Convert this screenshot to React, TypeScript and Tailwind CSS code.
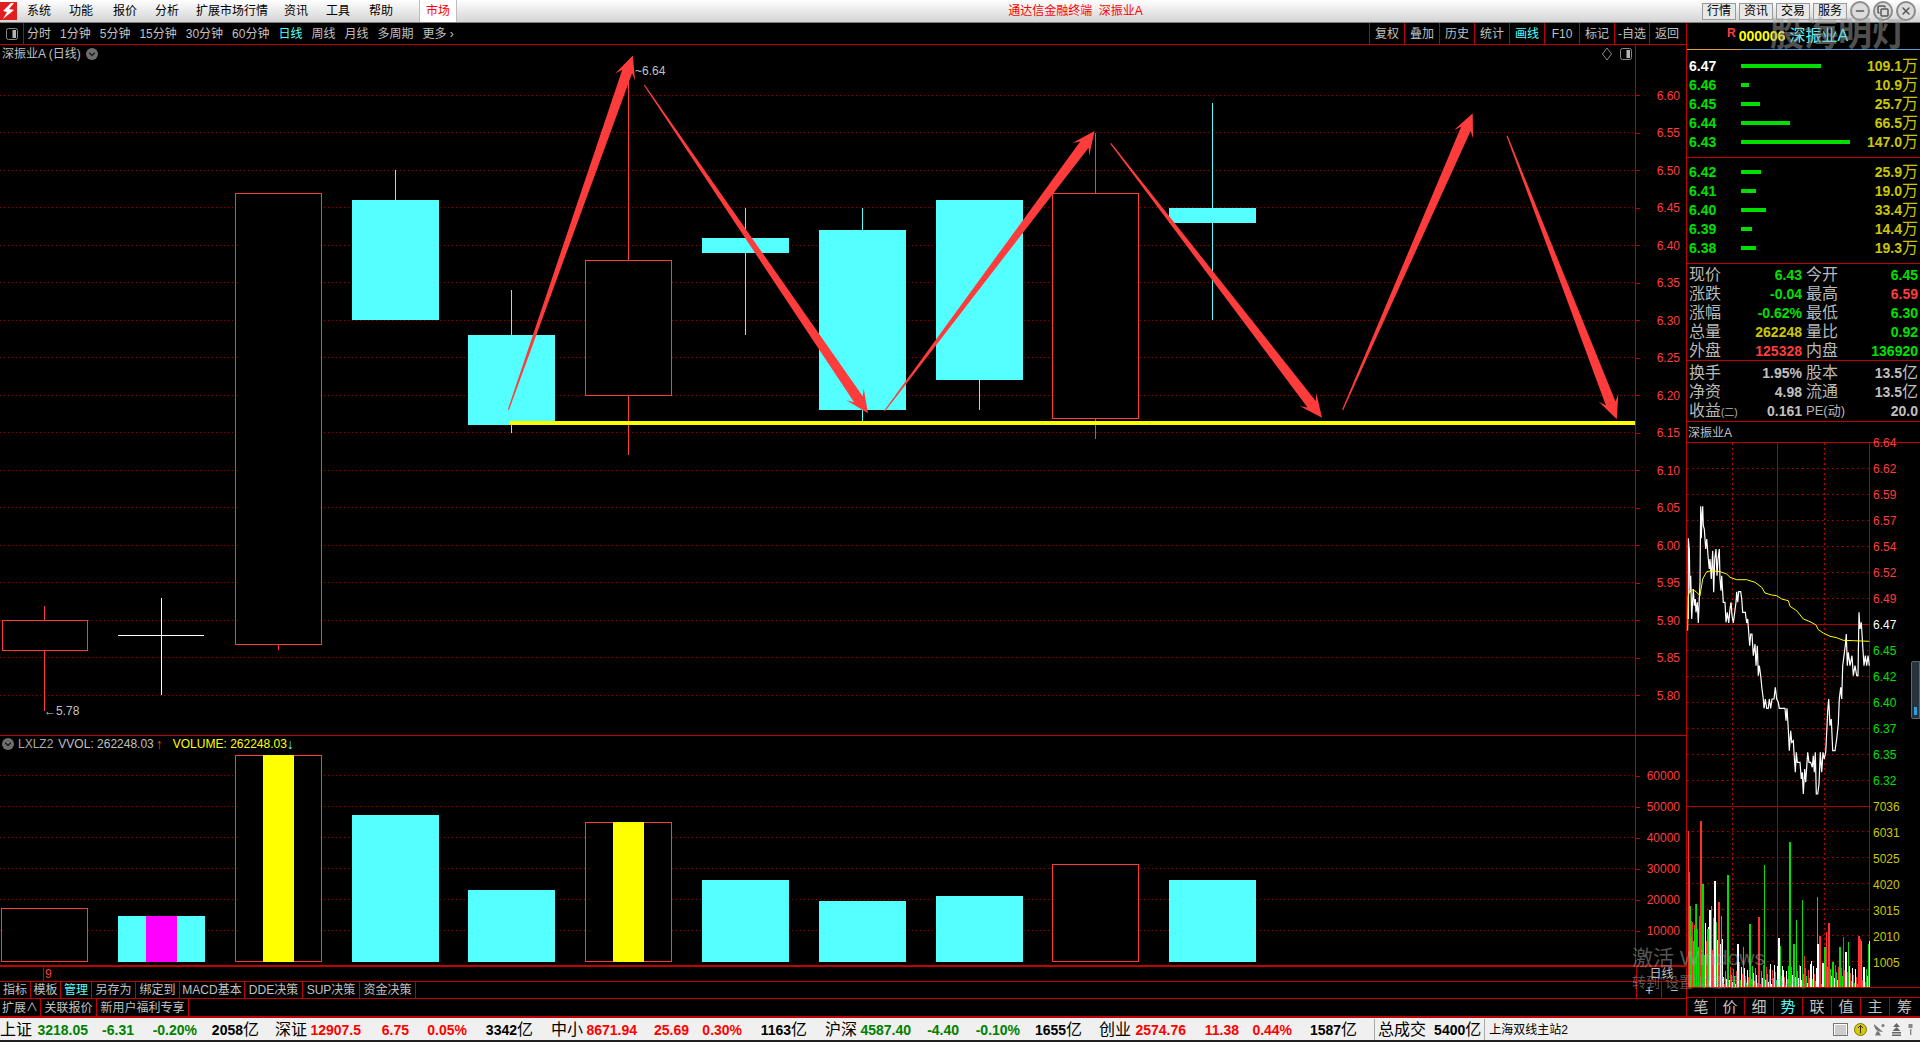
import { Copy, Minus, X } from 'lucide-react'

const LINE = '#b00000'
const CANDLE_RED = '#ff3c3c'
const CYAN = '#54ffff'
const DOT = '#8c0000'

// page coordinates, read off the reference
const candles = [
    { kind: 'red', x: 2, w: 85, top: 620, bottom: 650, wickX: 44.5, hi: 606, lo: 711 },
    { kind: 'doji', x: 118, w: 86, top: 635, bottom: 635, wickX: 161.5, hi: 598, lo: 695 },
    { kind: 'red', x: 235.5, w: 86, top: 193.5, bottom: 644, wickX: 278.5, hi: 193.5, lo: 650 },
    { kind: 'cyan', x: 352, w: 87, top: 200, bottom: 320, wickX: 395.5, hi: 170, lo: 320 },
    { kind: 'cyan', x: 468, w: 87, top: 335, bottom: 425, wickX: 511.5, hi: 290, lo: 433 },
    { kind: 'red', x: 585.5, w: 86, top: 260.5, bottom: 395.5, wickX: 628.5, hi: 66, lo: 455 },
    { kind: 'cyan', x: 702, w: 87, top: 238, bottom: 253, wickX: 745.5, hi: 208, lo: 335 },
    { kind: 'cyan', x: 819, w: 87, top: 230, bottom: 410, wickX: 862.5, hi: 208, lo: 421 },
    { kind: 'cyan', x: 936, w: 87, top: 200, bottom: 380, wickX: 979.5, hi: 200, lo: 410 },
    { kind: 'red', x: 1052.5, w: 86, top: 193.5, bottom: 418.5, wickX: 1095.5, hi: 133, lo: 439 },
    { kind: 'cyan', x: 1169, w: 87, top: 208, bottom: 223, wickX: 1212.5, hi: 103, lo: 320 },
]

const arrows = [
    [508.4, 409.7, 632.8, 55.4],
    [644.3, 85, 868, 413.3],
    [884.6, 411, 1094.6, 131],
    [1110.7, 143.3, 1322, 417.7],
    [1342.6, 410, 1472.7, 113.3],
    [1507, 135.7, 1616.8, 419.3],
]

const volumes = [
    { kind: 'hollow', x: 1.5, w: 86, top: 908.5 },
    { kind: 'cyan', x: 118, w: 87, top: 916, mid: '#ff00ff', midX: 146, midW: 31 },
    { kind: 'hollow', x: 235.5, w: 86, top: 755.5, mid: '#ffff00', midX: 263, midW: 31 },
    { kind: 'cyan', x: 352, w: 87, top: 815 },
    { kind: 'cyan', x: 468, w: 87, top: 890 },
    { kind: 'hollow', x: 585.5, w: 86, top: 822.5, mid: '#ffff00', midX: 613, midW: 31 },
    { kind: 'cyan', x: 702, w: 87, top: 880 },
    { kind: 'cyan', x: 819, w: 87, top: 901 },
    { kind: 'cyan', x: 936, w: 87, top: 896 },
    { kind: 'hollow', x: 1052.5, w: 86, top: 864.5 },
    { kind: 'cyan', x: 1169, w: 87, top: 880 },
]

const priceLabels = ['6.60', '6.55', '6.50', '6.45', '6.40', '6.35', '6.30', '6.25', '6.20', '6.15', '6.10', '6.05', '6.00', '5.95', '5.90', '5.85', '5.80']
const volumeLabels = ['60000', '50000', '40000', '30000', '20000', '10000']

const asks = [
    { price: '6.47', vol: '109.1', bar: 80, white: true },
    { price: '6.46', vol: '10.9', bar: 8 },
    { price: '6.45', vol: '25.7', bar: 19 },
    { price: '6.44', vol: '66.5', bar: 49 },
    { price: '6.43', vol: '147.0', bar: 109 },
]
const bids = [
    { price: '6.42', vol: '25.9', bar: 20 },
    { price: '6.41', vol: '19.0', bar: 15 },
    { price: '6.40', vol: '33.4', bar: 25 },
    { price: '6.39', vol: '14.4', bar: 11 },
    { price: '6.38', vol: '19.3', bar: 15 },
]

const G = 'text-[#00e000]'
const R = 'text-[#ff3c3c]'
const Y = 'text-[#c8c800]'
const W = 'text-[#c0c0c0]'

const quote = [
    ['现价', '6.43', G, '今开', '6.45', G],
    ['涨跌', '-0.04', G, '最高', '6.59', R],
    ['涨幅', '-0.62%', G, '最低', '6.30', G],
    ['总量', '262248', Y, '量比', '0.92', G],
    ['外盘', '125328', R, '内盘', '136920', G],
]
const finance = [
    ['换手', '1.95%', W, '股本', '13.5', W],
    ['净资', '4.98', W, '流通', '13.5', W],
    ['收益(二)', '0.161', W, 'PE(动)', '20.0', W],
]

const intradayLabels = [
    ['6.64', R], ['6.62', R], ['6.59', R], ['6.57', R], ['6.54', R], ['6.52', R], ['6.49', R],
    ['6.47', 'text-white'],
    ['6.45', G], ['6.42', G], ['6.40', G], ['6.37', G], ['6.35', G], ['6.32', G],
    ['7036', Y], ['6031', Y], ['5025', Y], ['4020', Y], ['3015', Y], ['2010', Y], ['1005', Y],
]

// traced from a crop, x = 1640 + X/3, y = 420 + Y/3
const priceLine = '145,600 145,358 148,390 150,520 152,470 155,600 158,540 160,510 163,560 166,540 168,580 172,550 175,612 178,540 180,490 182,262 184,358 186,290 188,262 190,320 193,330 197,390 200,360 205,420 208,450 210,420 214,480 218,395 221,520 224,420 228,390 231,470 234,420 238,390 240,480 243,515 245,470 250,550 255,550 258,610 262,580 266,612 270,570 273,550 276,590 280,612 284,580 288,550 290,518 293,550 296,518 302,518 305,540 308,580 316,580 320,612 323,600 326,640 329,680 332,645 336,645 340,710 345,675 348,740 352,680 355,770 358,740 362,770 366,810 370,840 372,868 376,840 380,868 385,868 388,840 392,868 396,840 402,840 406,805 410,840 415,850 418,868 435,868 438,905 441,868 445,930 448,995 452,935 455,970 460,965 462,1000 466,1060 469,1000 472,1030 480,1030 484,1080 487,1060 490,1125 494,1050 497,1090 503,1000 507,1030 512,1030 517,1045 520,1010 523,1060 526,1000 529,1125 533,1125 537,1095 541,1000 545,1060 549,1000 553,1020 557,1000 560,940 563,875 566,840 570,920 574,900 578,995 585,995 590,960 595,915 598,840 602,805 605,840 608,740 612,710 616,680 619,645 622,740 625,700 630,740 636,710 640,770 645,740 650,770 654,770 657,580 660,630 664,610 668,680 672,740 676,710 680,740 684,710 688,740'
const avgLine = '143,635 145,530 150,515 160,512 170,520 180,530 188,480 200,458 215,455 240,458 260,465 270,475 290,482 320,482 345,490 365,505 375,522 395,528 410,530 425,540 445,545 450,562 470,575 490,600 510,608 528,618 535,632 550,642 570,652 590,656 610,664 640,665 688,667'

const toPage = (pts: string) =>
    pts
        .split(' ')
        .map((p) => {
            const [a, b] = p.split(',').map(Number)
            return `${(1640 + a / 3).toFixed(1)},${(420 + b / 3).toFixed(1)}`
        })
        .join(' ')

const RED_BAR = '#ff3030'
const GREEN_BAR = '#00e000'
const tallBars: [number, number, string][] = [
    [203, 35, RED_BAR], [205, 160, RED_BAR], [241, 5, RED_BAR], [214, 310, RED_BAR], [226, 255, RED_BAR], [238, 290, RED_BAR], [245, 260, RED_BAR], [285, 243, RED_BAR], [295, 250, RED_BAR], [320, 230, RED_BAR], [415, 295, RED_BAR], [355, 430, RED_BAR], [625, 312, RED_BAR], [618, 340, RED_BAR], [598, 350, RED_BAR], [668, 355, RED_BAR], [715, 350, RED_BAR], [720, 360, RED_BAR], [660, 385, RED_BAR], [552, 410, RED_BAR],
    [208, 260, GREEN_BAR], [212, 355, GREEN_BAR], [218, 365, GREEN_BAR], [222, 330, GREEN_BAR], [228, 255, GREEN_BAR], [247, 195, GREEN_BAR], [262, 330, GREEN_BAR], [272, 260, GREEN_BAR], [280, 345, GREEN_BAR], [302, 290, GREEN_BAR], [322, 168, GREEN_BAR], [388, 315, GREEN_BAR], [431, 138, GREEN_BAR], [508, 70, GREEN_BAR], [545, 243, GREEN_BAR], [527, 303, GREEN_BAR], [520, 375, GREEN_BAR], [590, 235, GREEN_BAR], [613, 385, GREEN_BAR], [637, 430, GREEN_BAR], [683, 370, GREEN_BAR], [658, 385, GREEN_BAR], [722, 365, GREEN_BAR], [743, 375, GREEN_BAR], [368, 385, GREEN_BAR], [478, 380, GREEN_BAR],
    [283, 187, '#fff'], [268, 273, '#fff'], [255, 340, '#fff'], [305, 360, '#fff'], [352, 375, '#fff'], [475, 358, '#fff'], [592, 375, '#fff'], [573, 425, '#fff'], [607, 432, '#fff'], [676, 400, '#fff'], [730, 445, '#fff'], [748, 367, '#fff'], [450, 435, '#fff'], [485, 440, '#fff'], [540, 440, '#fff'],
]
const lowBars = Array.from({ length: 182 }, (_, i) => {
    const X = 203 + i * 3
    const r = ((i * 7919) % 97) / 97
    const h = X < 300 ? 60 + r * 150 : 6 + r * 62
    const color = [RED_BAR, GREEN_BAR, '#fff'][(i * 13) % 3]
    return { X, top: 503 - h, color }
})

const index = [
    { name: '上证', p: '3218.05', c: '-6.31', pct: '-0.20%', amt: '2058', color: 'text-[#008000]', pw: 'w-[56px]', cw: 'w-[46px]', pctw: 'w-[63px]', aw: 'w-[62px]', ml: 'ml-0' },
    { name: '深证', p: '12907.5', c: '6.75', pct: '0.05%', amt: '3342', color: 'text-[#ff0000]', pw: 'w-[54px]', cw: 'w-[48px]', pctw: 'w-[58px]', aw: 'w-[66px]', ml: 'ml-[16px]' },
    { name: '中小', p: '8671.94', c: '25.69', pct: '0.30%', amt: '1163', color: 'text-[#ff0000]', pw: 'w-[54px]', cw: 'w-[52px]', pctw: 'w-[53px]', aw: 'w-[65px]', ml: 'ml-[18px]' },
    { name: '沪深', p: '4587.40', c: '-4.40', pct: '-0.10%', amt: '1655', color: 'text-[#008000]', pw: 'w-[54px]', cw: 'w-[48px]', pctw: 'w-[61px]', aw: 'w-[62px]', ml: 'ml-[18px]' },
    { name: '创业', p: '2574.76', c: '11.38', pct: '0.44%', amt: '1587', color: 'text-[#ff0000]', pw: 'w-[55px]', cw: 'w-[53px]', pctw: 'w-[53px]', aw: 'w-[65px]', ml: 'ml-[17px]' },
]

const menu = [
    { t: '系统', c: 'ml-[10px]' },
    { t: '功能', c: 'ml-[18px]' },
    { t: '报价', c: 'ml-[20px]' },
    { t: '分析', c: 'ml-[18px]' },
    { t: '扩展市场行情', c: 'ml-[17px]' },
    { t: '资讯', c: 'ml-[16px]' },
    { t: '工具', c: 'ml-[18px]' },
    { t: '帮助', c: 'ml-[19px]' },
]

const periods = ['分时', '1分钟', '5分钟', '15分钟', '30分钟', '60分钟', '日线', '周线', '月线', '多周期', '更多 ›']
const tools = ['复权', '叠加', '历史', '统计', '画线', 'F10', '标记', '-自选', '返回']

const tabsOne = [
    { t: '指标', w: 'w-[31px]' },
    { t: '模板', w: 'w-[30px]' },
    { t: '管理', w: 'w-[31px]', on: true },
    { t: '另存为', w: 'w-[44px]' },
    { t: '绑定到', w: 'w-[44px]' },
    { t: 'MACD基本', w: 'w-[65px]' },
    { t: 'DDE决策', w: 'w-[58px]' },
    { t: 'SUP决策', w: 'w-[57px]' },
    { t: '资金决策', w: 'w-[56px]' },
]
const tabsTwo = [
    { t: '扩展∧', w: 'w-[41px]' },
    { t: '关联报价', w: 'w-[56px]' },
    { t: '新用户福利专享', w: 'w-[92px]' },
]
const sideTabs = ['笔', '价', '细', '势', '联', '值', '主', '筹']

function arrowPoints([x1, y1, x2, y2]: number[]) {
    const len = Math.hypot(x2 - x1, y2 - y1)
    const dx = (x2 - x1) / len
    const dy = (y2 - y1) / len
    const at = (back: number, side: number) => `${x2 - dx * back - dy * side},${y2 - dy * back + dx * side}`
    return [at(len, 0.6), at(17, 5.2), at(23, 10.5), at(0, 0), at(23, -10.5), at(17, -5.2), at(len, -0.6)].join(' ')
}

function CircleChevron() {
    return (
        <svg width="12" height="12" viewBox="0 0 12 12">
            <circle cx="6" cy="6" r="6" fill="#6e6e6e" />
            <path d="M3.2 4.8 6 7.6l2.8-2.8" fill="none" stroke="#1c1c1c" strokeWidth="1.4" />
        </svg>
    )
}

function PanelIcon() {
    return (
        <svg width="12" height="12" viewBox="0 0 12 12">
            <rect x="0.5" y="0.5" width="11" height="11" rx="2" fill="none" stroke="#8a8a8a" />
            <rect x="6.5" y="2" width="3.5" height="8" fill="#b4b4b4" />
        </svg>
    )
}

function CandleChart() {
    return (
        <svg width="1635" height="690" viewBox="0 45 1635 690" className="block">
            {priceLabels.map((_, i) => (
                <line key={i} x1="0" x2="1635" y1={Math.floor(95 + i * 37.5) + 0.5} y2={Math.floor(95 + i * 37.5) + 0.5} stroke={DOT} strokeDasharray="1 3" />
            ))}
            {candles.map((c, i) => {
                const color = c.kind === 'red' ? CANDLE_RED : c.kind === 'cyan' ? CYAN : '#ffffff'
                return (
                    <g key={i} shapeRendering="crispEdges">
                        <line x1={c.wickX} x2={c.wickX} y1={c.hi} y2={c.lo} stroke={color} />
                        {c.kind === 'red' && <rect x={c.x} y={c.top} width={c.w} height={c.bottom - c.top} fill="#000" stroke={CANDLE_RED} />}
                        {c.kind === 'cyan' && <rect x={c.x} y={c.top} width={c.w} height={c.bottom - c.top} fill={CYAN} />}
                        {c.kind === 'doji' && <line x1={c.x} x2={c.x + c.w} y1={c.top + 0.5} y2={c.top + 0.5} stroke="#fff" />}
                    </g>
                )
            })}
            <line x1="509.5" x2="1635" y1="423" y2="423" stroke="#ffff00" strokeWidth="4" />
            {arrows.map((a, i) => (
                <polygon key={i} points={arrowPoints(a)} fill={CANDLE_RED} />
            ))}
        </svg>
    )
}

function VolumeChart() {
    return (
        <svg width="1635" height="229" viewBox="0 736 1635 229" className="block">
            {[775, 806, 837, 868, 899, 930].map((y) => (
                <line key={y} x1="0" x2="1635" y1={y + 0.5} y2={y + 0.5} stroke={DOT} strokeDasharray="1 3" />
            ))}
            {volumes.map((v, i) => (
                <g key={i} shapeRendering="crispEdges">
                    {v.kind === 'hollow' ? (
                        <rect x={v.x} y={v.top} width={v.w} height={961.5 - v.top} fill="#000" stroke={CANDLE_RED} />
                    ) : (
                        <rect x={v.x} y={v.top} width={v.w} height={962 - v.top} fill={CYAN} />
                    )}
                    {v.mid && <rect x={v.midX} y={v.top - 0.5} width={v.midW} height={962.5 - v.top} fill={v.mid} />}
                </g>
            ))}
        </svg>
    )
}

function IntradayChart() {
    const dotted = [469, 495, 521, 547, 573, 599, 651, 677, 703, 729, 755, 781, 832, 858, 884, 910, 936, 962]
    return (
        <svg width="183" height="544" viewBox="1687 444 183 544" className="block shrink-0">
            {dotted.map((y) => (
                <line key={y} x1="1687" x2="1869" y1={y + 0.5} y2={y + 0.5} stroke="#c00000" strokeDasharray="1.5 3.5" />
            ))}
            <g shapeRendering="crispEdges">
                <line x1="1732.5" x2="1732.5" y1="444" y2="988" stroke="#c00000" strokeDasharray="1.5 3.5" />
                <line x1="1824.5" x2="1824.5" y1="444" y2="988" stroke="#c00000" strokeDasharray="1.5 3.5" />
                <line x1="1777.5" x2="1777.5" y1="444" y2="988" stroke={LINE} />
                <line x1="1687" x2="1869" y1="625.5" y2="625.5" stroke={LINE} />
                <line x1="1687" x2="1869" y1="807.5" y2="807.5" stroke={LINE} />
                <line x1="1869.5" x2="1869.5" y1="444" y2="988" stroke={LINE} />
            </g>
            <polyline points={toPage(priceLine)} fill="none" stroke="#ffffff" strokeWidth="1.2" />
            <polyline points={toPage(avgLine)} fill="none" stroke="#ffff00" strokeWidth="1" />
            <g shapeRendering="crispEdges">
                {lowBars.map((b, i) => (
                    <rect key={i} x={1620 + b.X / 3} y={820 + b.top / 3} width="1.5" height={(503 - b.top) / 3} fill={b.color} />
                ))}
                {tallBars.map(([bx, top, color], i) => (
                    <rect key={i} x={1620 + bx / 3} y={820 + top / 3} width="1.2" height={(503 - top) / 3} fill={color} />
                ))}
            </g>
        </svg>
    )
}

function DepthRow({ row }: { row: { price: string; vol: string; bar: number; white?: boolean } }) {
    return (
        <div className="flex h-[19px] items-center pl-[2px] pr-[2px]">
            <span className={`w-[52px] text-[14px] font-bold ${row.white ? 'text-white' : 'text-[#00e000]'}`}>{row.price}</span>
            <div className="h-[4px] bg-[#00e000]" style={{ width: row.bar }} />
            <span className="ml-auto flex items-center text-[#c8c800]">
                <span className="text-[14px] font-bold">{row.vol}</span>
                <span className="text-[16px] leading-none">万</span>
            </span>
        </div>
    )
}

function QuoteLabel({ text }: { text: string }) {
    if (text === '收益(二)') {
        return (
            <span className="text-[16px] leading-none text-[#b8b8b8]">
                收益<span className="text-[10px]">(二)</span>
            </span>
        )
    }
    if (text === 'PE(动)') {
        return <span className="text-[13px] leading-none text-[#b8b8b8]">{text}</span>
    }
    return <span className="text-[16px] leading-none text-[#b8b8b8]">{text}</span>
}

function QuoteRow({ row }: { row: string[] }) {
    const unit = row[4] === '13.5'
    return (
        <div className="grid h-[19px] grid-cols-[115px_116px] items-center">
            <div className="flex items-center justify-between pl-[2px]">
                <QuoteLabel text={row[0]} />
                <span className={`text-[14px] font-bold ${row[2]}`}>{row[1]}</span>
            </div>
            <div className="flex items-center justify-between pl-[4px]">
                <QuoteLabel text={row[3]} />
                <span className={`flex items-center text-[14px] font-bold ${row[5]}`}>
                    {row[4]}
                    {unit && <span className="text-[16px] font-normal leading-none">亿</span>}
                </span>
            </div>
        </div>
    )
}

function StatusIcons() {
    return (
        <div className="ml-auto flex items-center gap-[6px] pr-[7px]">
            <svg width="15" height="13" viewBox="0 0 15 13">
                <rect x="0.5" y="0.5" width="14" height="12" fill="#fff" stroke="#777" />
                <path d="M2 3h11M2 5h11M2 7h11M2 9h11M2 11h11" stroke="#999" />
            </svg>
            <svg width="13" height="13" viewBox="0 0 13 13">
                <circle cx="6.5" cy="6.5" r="6" fill="#d8c800" stroke="#807400" />
                <path d="M6.5 2.5v8M4 5l2.5-2.5L9 5" fill="none" stroke="#333" />
            </svg>
            <svg width="12" height="13" viewBox="0 0 12 13">
                <path d="M1 1c0 5 3 8 9 8L1 1Z" fill="#777" />
                <path d="M4 8 2 12.5h6L6 9" fill="#777" />
                <circle cx="10" cy="2.5" r="1.5" fill="#777" />
            </svg>
            <svg width="9" height="13" viewBox="0 0 9 13" className="ml-[1px]">
                <path d="M4.5 0 8 4H1l3.5-4ZM4.5 4 8.5 8H.5l4-4ZM0 9h9v1.5H0ZM0 11.5h9V13H0Z" fill="#666" />
            </svg>
            <svg width="5" height="13" viewBox="0 0 5 13" className="ml-[1px]">
                <rect x="0.5" y="1" width="4" height="4" fill="#888" />
                <rect x="2" y="6" width="1.4" height="6" fill="#888" />
            </svg>
        </div>
    )
}

export default function App() {
    return (
        <div className="relative flex h-[1042px] w-[1920px] flex-col overflow-hidden bg-black font-['Liberation_Sans','Noto_Sans_CJK_SC',sans-serif] text-[12px] leading-none text-[#c0c0c0]">
            {/* title bar */}
            <div className="flex h-[23px] shrink-0 items-center border-b border-[#808080] bg-gradient-to-b from-white to-[#d4d4d4] text-black">
                <svg width="17" height="18" viewBox="0 0 17 18" className="shrink-0">
                    <rect width="17" height="18" fill="#e02020" />
                    <path d="M11 1 3 9l4 1-4 7 11-9-5-1 5-6Z" fill="#fff" />
                </svg>
                {menu.map((m) => (
                    <span key={m.t} className={m.c}>
                        {m.t}
                    </span>
                ))}
                <span className="ml-[26px] flex h-full w-[38px] items-center justify-center border-x border-[#bdbdbd] bg-white text-[#ff0000]">市场</span>
                <span className="ml-[551px] whitespace-pre text-[#ff0000]">通达信金融终端  深振业A</span>
                <div className="ml-auto flex items-center gap-[3px] pr-[4px]">
                    {['行情', '资讯', '交易', '服务'].map((t) => (
                        <span key={t} className="flex h-[17px] w-[34px] items-center justify-center border border-[#9a9a9a] bg-[#e8e8e8]">
                            {t}
                        </span>
                    ))}
                    {[Minus, Copy, X].map((Icon, i) => (
                        <span key={i} className="flex h-[20px] w-[20px] items-center justify-center rounded-full border-2 border-[#8c8c8c] bg-[#dcdcdc] text-[#555]">
                            <Icon size={12} strokeWidth={3} />
                        </span>
                    ))}
                </div>
            </div>

            <div className="flex h-[993px] shrink-0">
                {/* left side */}
                <div className="flex w-[1686px] shrink-0 flex-col">
                    <div className="flex h-[22px] shrink-0 items-center border-b border-[#c00000]">
                        <div className="flex h-full w-[24px] items-center justify-center border-r border-[#c00000]">
                            <PanelIcon />
                        </div>
                        <div className="ml-[3px] flex gap-[9px]">
                            {periods.map((p) => (
                                <span key={p} className={p === '日线' ? 'text-[#54ffff]' : ''}>
                                    {p}
                                </span>
                            ))}
                        </div>
                        <div className="ml-auto flex h-full pr-[2px]">
                            {tools.map((t) => (
                                <span key={t} className={`flex w-[35px] items-center justify-center border-l border-[#c00000] ${t === '画线' ? 'text-[#54ffff]' : ''}`}>
                                    {t}
                                </span>
                            ))}
                        </div>
                    </div>

                    <div className="flex h-[690px] shrink-0">
                        <div className="relative h-full w-[1635px]">
                            <CandleChart />
                            <div className="absolute left-[2px] top-[3px] flex items-center gap-[5px]">
                                <span>深振业A (日线)</span>
                                <CircleChevron />
                            </div>
                            <svg width="12" height="14" viewBox="0 0 12 14" className="absolute left-[1601px] top-[2px]">
                                <path d="M6 1l4.5 6L6 13 1.5 7 6 1Z" fill="none" stroke="#8a8a8a" />
                            </svg>
                            <div className="absolute left-[1620px] top-[3px]">
                                <PanelIcon />
                            </div>
                            <span className="absolute left-[635px] top-[20px]">~6.64</span>
                            <span className="absolute left-[44px] top-[660px]">←5.78</span>
                        </div>
                        <div className="w-[51px] border-l border-[#c00000] pt-[31.75px]">
                            {priceLabels.map((p) => (
                                <div key={p} className="flex h-[37.5px] items-center justify-between pr-[6px] text-[#ff3c3c]">
                                    <span className="h-px w-[4px] bg-[#c00000]" />
                                    <span>{p}</span>
                                </div>
                            ))}
                        </div>
                    </div>

                    <div className="flex h-[230px] shrink-0 border-t border-[#c00000]">
                        <div className="relative h-full w-[1635px]">
                            <VolumeChart />
                            <div className="absolute left-[2px] top-[1px] flex h-[14px] items-center">
                                <CircleChevron />
                                <span className="ml-[4px] text-[#a8a8a8]">LXLZ2</span>
                                <span className="ml-[5px]">VVOL: 262248.03</span>
                                <span className="ml-[2px] text-[14px] font-bold text-[#ff3c3c]">↑</span>
                                <span className="ml-[10px] text-[#ffff00]">VOLUME: 262248.03</span>
                                <span className="text-[14px] font-bold text-[#54ffff]">↓</span>
                            </div>
                        </div>
                        <div className="w-[51px] border-l border-[#c00000] pt-[24.5px]">
                            {volumeLabels.map((v) => (
                                <div key={v} className="flex h-[31px] items-center justify-between pr-[6px] text-[#ff3c3c]">
                                    <span className="h-px w-[4px] bg-[#c00000]" />
                                    <span>{v}</span>
                                </div>
                            ))}
                        </div>
                    </div>

                    <div className="flex h-[33px] shrink-0 border-t-2 border-[#c00000]">
                        <div className="flex w-[1636px] flex-col">
                            <div className="flex h-[15px] items-center">
                                <span className="ml-[43px] flex h-full items-center border-l border-[#c00000] pl-[1px] text-[#ff3c3c]">9</span>
                            </div>
                            <div className="flex h-[18px] items-center border-t border-[#c00000]">
                                {tabsOne.map((t) => (
                                    <span key={t.t} className={`flex h-full items-center justify-center border-r border-[#c00000] ${t.w} ${t.on ? 'text-[#54ffff]' : ''}`}>
                                        {t.t}
                                    </span>
                                ))}
                            </div>
                        </div>
                        <div className="flex w-[50px] flex-col border-l border-[#c00000]">
                            <div className="flex h-[15px] items-center justify-center">日线</div>
                            <div className="flex h-[18px] items-center border-t border-[#c00000]">
                                <span className="flex h-full w-[25px] items-center justify-center border-r border-[#c00000] text-[14px]">+</span>
                                <span className="flex h-full w-[24px] items-center justify-center text-[14px]">−</span>
                            </div>
                        </div>
                    </div>

                    <div className="flex h-[18px] shrink-0 items-center border-t border-[#c00000]">
                        {tabsTwo.map((t) => (
                            <span key={t.t} className={`flex h-full items-center justify-center border-r border-[#c00000] ${t.w}`}>
                                {t.t}
                            </span>
                        ))}
                    </div>
                </div>

                {/* right side */}
                <div className="flex w-[234px] shrink-0 flex-col border-l border-[#c00000]">
                    <div className="flex h-[27px] shrink-0 items-center border-b border-[#5a9ad0] pl-[40px]">
                        <span className="-mt-[6px] font-bold text-[#ff3c3c]">R</span>
                        <span className="ml-[3px] text-[14px] font-bold text-[#ffff00]">000006</span>
                        <span className="ml-[4px] text-[16px] text-[#54ffff]">深振业A</span>
                    </div>
                    <div className="-mt-px mb-0 h-px w-[55px] shrink-0 bg-[#d8a030]" />
                    <div className="h-[108px] shrink-0 border-b border-[#c00000] pt-[6.5px]">
                        {asks.map((r) => (
                            <DepthRow key={r.price} row={r} />
                        ))}
                    </div>
                    <div className="h-[106px] shrink-0 border-b border-[#c00000] pt-[4px]">
                        {bids.map((r) => (
                            <DepthRow key={r.price} row={r} />
                        ))}
                    </div>
                    <div className="h-[97px] shrink-0 border-b border-[#c00000] pt-[1.5px]">
                        {quote.map((r) => (
                            <QuoteRow key={r[0]} row={r} />
                        ))}
                    </div>
                    <div className="h-[61px] shrink-0 border-b border-[#c00000] pt-[2px]">
                        {finance.map((r) => (
                            <QuoteRow key={r[0]} row={r} />
                        ))}
                    </div>
                    <div className="flex h-[21px] shrink-0 items-center border-b border-[#c00000] pl-[1px] pt-px">深振业A</div>
                    <div className="flex h-[544px] shrink-0">
                        <IntradayChart />
                        <div className="-mt-[13px] pl-[3px]">
                            {intradayLabels.map(([t, c], i) => (
                                <div key={i} className={`flex h-[26px] items-center ${c}`}>
                                    {t}
                                </div>
                            ))}
                        </div>
                    </div>
                    <div className="h-[10px] shrink-0 border-t border-[#c00000]" />
                    <div className="flex h-[18px] shrink-0 border-t border-[#c00000]">
                        {sideTabs.map((t) => (
                            <span key={t} className={`flex h-full w-[29px] items-center justify-center border-r border-[#c00000] text-[15px] last:border-r-0 ${t === '势' ? 'text-[#54ffff]' : ''}`}>
                                {t}
                            </span>
                        ))}
                    </div>
                </div>
            </div>

            {/* status bar */}
            <div className="flex h-[24px] shrink-0 items-center border-t-2 border-[#c00000] bg-[#f0f0f0] pt-px text-black">
                {index.map((g) => (
                    <div key={g.name} className={`flex items-center ${g.ml}`}>
                        <span className="text-[16px] leading-none">{g.name}</span>
                        <span className={`text-right text-[14px] font-bold ${g.pw} ${g.color}`}>{g.p}</span>
                        <span className={`text-right text-[14px] font-bold ${g.cw} ${g.color}`}>{g.c}</span>
                        <span className={`text-right text-[14px] font-bold ${g.pctw} ${g.color}`}>{g.pct}</span>
                        <span className={`flex items-center justify-end ${g.aw}`}>
                            <span className="text-[14px] font-bold">{g.amt}</span>
                            <span className="text-[16px] leading-none">亿</span>
                        </span>
                    </div>
                ))}
                <div className="ml-[17px] flex h-full items-center border-x border-[#a8a8a8] pl-[3px] pr-[3px]">
                    <span className="text-[16px] leading-none">总成交</span>
                    <span className="ml-[8px] text-[14px] font-bold">5400</span>
                    <span className="text-[16px] leading-none">亿</span>
                </div>
                <span className="ml-[4px]">上海双线主站2</span>
                <StatusIcons />
            </div>
            <div className="h-[2px] shrink-0 bg-[#202020]" />

            {/* overlays that sit on top of the window */}
            <span className="pointer-events-none absolute left-[1770px] top-[17px] text-[34px] font-bold text-[#a0a0a0]/50">股海明灯</span>
            <span className="pointer-events-none absolute left-[1632px] top-[947px] text-[21px] text-[#a0a0a0]/55">激活 Windows</span>
            <span className="pointer-events-none absolute left-[1632px] top-[975px] text-[14px] text-[#a0a0a0]/55">转到"设置"以激活 Windows。</span>
            <div className="absolute left-[1911px] top-[661px] flex h-[58px] w-[9px] items-end justify-center rounded-l-[2px] border border-[#5a6a78] bg-[#26323c] pb-[3px]">
                <div className="h-[8px] w-[3px] bg-[#2aa0e0]" />
            </div>
        </div>
    )
}
